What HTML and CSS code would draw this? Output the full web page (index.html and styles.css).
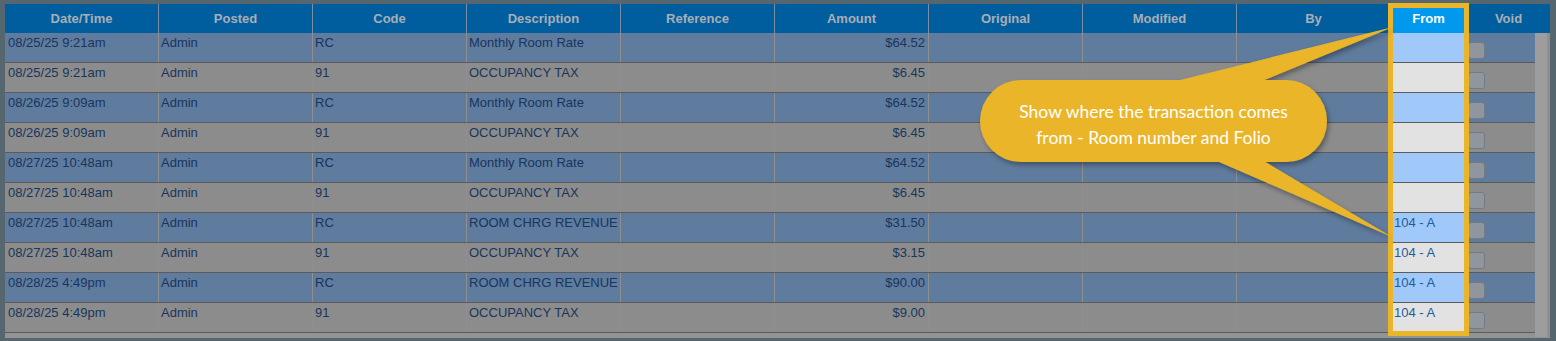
FILE: index.html
```html
<!DOCTYPE html>
<html>
<head>
<meta charset="utf-8">
<link rel="stylesheet" href="styles.css">
</head>
<body>
<div class="panel">
  <div class="thead">
    <div class="th">Date/Time</div>
    <div class="th">Posted</div>
    <div class="th">Code</div>
    <div class="th">Description</div>
    <div class="th">Reference</div>
    <div class="th">Amount</div>
    <div class="th">Original</div>
    <div class="th">Modified</div>
    <div class="th">By</div>
    <div class="th from">From</div>
    <div class="th">Void</div>
  </div>
  <div class="tbody">
    <div class="rows">
      <div class="row blue"><div class="td">08/25/25 9:21am</div><div class="td">Admin</div><div class="td">RC</div><div class="td">Monthly Room Rate</div><div class="td"></div><div class="td num">$64.52</div><div class="td"></div><div class="td"></div><div class="td"></div><div class="td from"></div><div class="td void"><div class="cb"></div></div></div>
      <div class="row grey"><div class="td">08/25/25 9:21am</div><div class="td">Admin</div><div class="td">91</div><div class="td">OCCUPANCY TAX</div><div class="td"></div><div class="td num">$6.45</div><div class="td"></div><div class="td"></div><div class="td"></div><div class="td from"></div><div class="td void"><div class="cb"></div></div></div>
      <div class="row blue"><div class="td">08/26/25 9:09am</div><div class="td">Admin</div><div class="td">RC</div><div class="td">Monthly Room Rate</div><div class="td"></div><div class="td num">$64.52</div><div class="td"></div><div class="td"></div><div class="td"></div><div class="td from"></div><div class="td void"><div class="cb"></div></div></div>
      <div class="row grey"><div class="td">08/26/25 9:09am</div><div class="td">Admin</div><div class="td">91</div><div class="td">OCCUPANCY TAX</div><div class="td"></div><div class="td num">$6.45</div><div class="td"></div><div class="td"></div><div class="td"></div><div class="td from"></div><div class="td void"><div class="cb"></div></div></div>
      <div class="row blue"><div class="td">08/27/25 10:48am</div><div class="td">Admin</div><div class="td">RC</div><div class="td">Monthly Room Rate</div><div class="td"></div><div class="td num">$64.52</div><div class="td"></div><div class="td"></div><div class="td"></div><div class="td from"></div><div class="td void"><div class="cb"></div></div></div>
      <div class="row grey"><div class="td">08/27/25 10:48am</div><div class="td">Admin</div><div class="td">91</div><div class="td">OCCUPANCY TAX</div><div class="td"></div><div class="td num">$6.45</div><div class="td"></div><div class="td"></div><div class="td"></div><div class="td from"></div><div class="td void"><div class="cb"></div></div></div>
      <div class="row blue"><div class="td">08/27/25 10:48am</div><div class="td">Admin</div><div class="td">RC</div><div class="td">ROOM CHRG REVENUE</div><div class="td"></div><div class="td num">$31.50</div><div class="td"></div><div class="td"></div><div class="td"></div><div class="td from">104 - A</div><div class="td void"><div class="cb"></div></div></div>
      <div class="row grey"><div class="td">08/27/25 10:48am</div><div class="td">Admin</div><div class="td">91</div><div class="td">OCCUPANCY TAX</div><div class="td"></div><div class="td num">$3.15</div><div class="td"></div><div class="td"></div><div class="td"></div><div class="td from">104 - A</div><div class="td void"><div class="cb"></div></div></div>
      <div class="row blue"><div class="td">08/28/25 4:49pm</div><div class="td">Admin</div><div class="td">RC</div><div class="td">ROOM CHRG REVENUE</div><div class="td"></div><div class="td num">$90.00</div><div class="td"></div><div class="td"></div><div class="td"></div><div class="td from">104 - A</div><div class="td void"><div class="cb"></div></div></div>
      <div class="row grey"><div class="td">08/28/25 4:49pm</div><div class="td">Admin</div><div class="td">91</div><div class="td">OCCUPANCY TAX</div><div class="td"></div><div class="td num">$9.00</div><div class="td"></div><div class="td"></div><div class="td"></div><div class="td from">104 - A</div><div class="td void"><div class="cb"></div></div></div>
    </div>
    <div class="scroll"></div>
  </div>
</div>

<div class="hl-box"></div>

<svg class="callout-art" width="1556" height="341" viewBox="0 0 1556 341">
  <defs>
    <filter id="sh" x="-10%" y="-10%" width="120%" height="130%">
      <feDropShadow dx="2" dy="3" stdDeviation="2.5" flood-color="#000" flood-opacity="0.35"/>
    </filter>
  </defs>
  <g filter="url(#sh)" fill="#ebb52a">
    <polygon points="1140,90 1240,90 1393,27"/>
    <polygon points="1180,145 1245,150 1392,237"/>
    <rect x="980" y="80" width="347" height="82" rx="41" ry="41"/>
  </g>
</svg>
<div class="callout-text">Show where the transaction comes<br>from - Room number and Folio</div>
</body>
</html>
```

FILE: styles.css
```css
html, body {
  margin: 0;
  padding: 0;
}
body {
  width: 1556px;
  height: 341px;
  overflow: hidden;
  position: relative;
  background: #56666f;
  font-family: "Liberation Sans", Arial, sans-serif;
}
.panel {
  margin: 4px 6px 0 5px;
  height: 334px;
  background: #939393;
}
.thead {
  display: grid;
  grid-template-columns: 153px repeat(8, 154px) 76px 84px;
  height: 29px;
  background: #005e9e;
}
.th {
  box-sizing: border-box;
  border-left: 1px solid #7a8da2;
  color: #a8aeb5;
  font-weight: bold;
  font-size: 13px;
  display: flex;
  align-items: center;
  justify-content: center;
}
.th:first-child {
  border-left: none;
}
.th.from {
  background: #0099ee;
  color: #ffffff;
}
.tbody {
  display: flex;
}
.rows {
  width: 1530px;
}
.row {
  display: grid;
  grid-template-columns: 153px repeat(8, 154px) 76px 69px;
  height: 30px;
  box-sizing: border-box;
  border-bottom: 1px solid #5b5b5b;
}
.row.blue {
  background: #5f7b9d;
}
.row.grey {
  background: #8c8c8c;
}
.td {
  box-sizing: border-box;
  border-left: 1px solid #8f8f8f;
  padding: 2px 3px 0 2px;
  font-size: 13px;
  line-height: 15px;
  color: #18365d;
  white-space: nowrap;
  overflow: hidden;
}
.td:first-child {
  border-left: none;
  padding-left: 3px;
}
.td.num {
  text-align: right;
}
.td.from {
  color: #1d5c9c;
  padding-left: 3px;
}
.row.blue .td.from {
  background: #a0c8f9;
}
.row.grey .td.from {
  background: #e2e2e2;
}
.td.void {
  padding: 0 0 0 1px;
}
.cb {
  width: 15px;
  height: 15px;
  margin-top: 9px;
  border: 1px solid #737a82;
  border-radius: 3px;
  background: #8f969d;
}
.scroll {
  width: 15px;
  height: 304px;
  background: linear-gradient(to right, #9d9d9d 12px, #8f8f8f 12px);
}
.hl-box {
  position: absolute;
  left: 1388px;
  top: 3px;
  width: 81px;
  height: 333px;
  box-sizing: border-box;
  border: 5px solid #ebb52a;
}
.callout-art {
  position: absolute;
  left: 0;
  top: 0;
}
.callout-text {
  position: absolute;
  left: 980px;
  top: 80px;
  width: 347px;
  height: 82px;
  box-sizing: border-box;
  padding-top: 7px;
  display: flex;
  align-items: center;
  justify-content: center;
  text-align: center;
  font-family: Lato, "Open Sans", sans-serif;
  font-size: 17.5px;
  line-height: 26px;
  color: #ffffff;
}
```
